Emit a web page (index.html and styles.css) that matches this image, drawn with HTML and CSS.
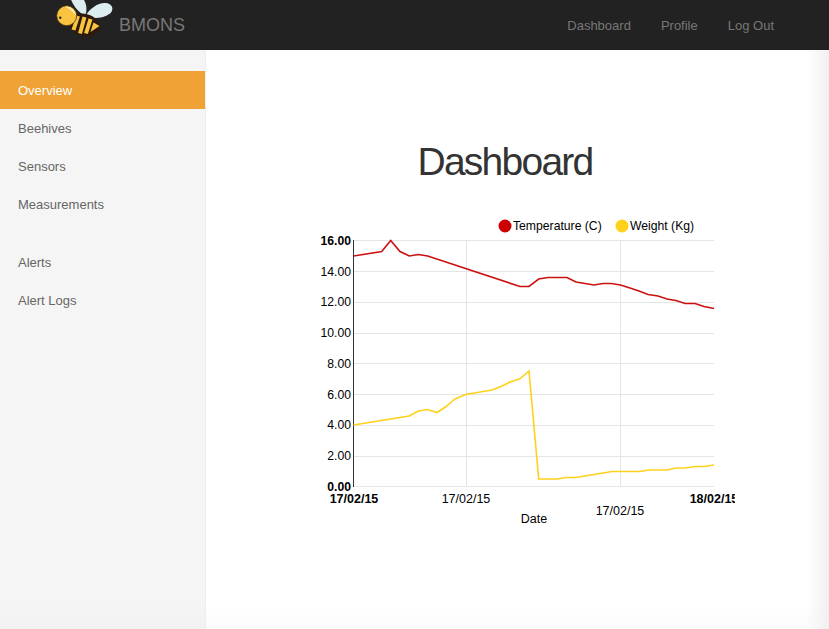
FILE: index.html
```html
<!DOCTYPE html>
<html lang="en">
<head>
    <meta charset="UTF-8">
    <meta name="viewport" content="width=device-width, initial-scale=1.0">
    <title>BMONS Dashboard</title>
    <link rel="stylesheet" href="styles.css">
</head>
<body>

<header class="navbar">
    <a class="brand" href="#">
        <svg class="logo" width="58" height="50" viewBox="0 0 58 50">
            <!-- wings -->
            <path d="M15 -3 C18 6 24 13 30 15.500 C33 9 31 2 27 -3 Z" fill="#dcedef"/>
            <path d="M31 15 C35 8 44 2 51 3 C58 4 59 10 55 13.500 C49 18 40 19 32 17 Z" fill="#dcedef"/>
            <!-- body -->
            <ellipse cx="29.500" cy="25" rx="15.500" ry="11" transform="rotate(15 29.500 25)" fill="#2e1a0c"/>
            <g class="stripes">
                <line x1="23" y1="16" x2="18.500" y2="30"/>
                <line x1="29.500" y1="17" x2="25" y2="33.500"/>
                <line x1="35.500" y1="19" x2="31" y2="33.500"/>
            </g>
            <path d="M38.500 22.500 L44.500 26 L35.500 32 Z" fill="#f9c440"/>
            <!-- head -->
            <circle cx="11.700" cy="15.700" r="10" fill="#f9c440" stroke="#4a3312" stroke-width="0.8"/>
            <path d="M10 6.500 C15 6 20.500 10 21 15.500 C18 11.500 14.500 8.500 10 6.500 Z" fill="#fdf0c4"/>
            <circle cx="5.200" cy="17.700" r="1.200" fill="#222"/>
        </svg>
        <span class="brand-name">BMONS</span>
    </a>
    <nav class="top-links">
        <a href="#">Dashboard</a>
        <a href="#">Profile</a>
        <a href="#">Log Out</a>
    </nav>
</header>

<div class="layout">
    <aside class="sidebar">
        <ul class="side-nav">
            <li class="active"><a href="#">Overview</a></li>
            <li><a href="#">Beehives</a></li>
            <li><a href="#">Sensors</a></li>
            <li><a href="#">Measurements</a></li>
        </ul>
        <ul class="side-nav">
            <li><a href="#">Alerts</a></li>
            <li><a href="#">Alert Logs</a></li>
        </ul>
    </aside>

    <main class="content">
        <h1 class="page-title">Dashboard</h1>
        <svg class="chart" width="415" height="320" viewBox="320 210 415 320">
            <g class="grid">
                <line x1="353" x2="714" y1="240.500" y2="240.500"/>
                <line x1="353" x2="714" y1="271.500" y2="271.500"/>
                <line x1="353" x2="714" y1="302.500" y2="302.500"/>
                <line x1="353" x2="714" y1="333.500" y2="333.500"/>
                <line x1="353" x2="714" y1="363.500" y2="363.500"/>
                <line x1="353" x2="714" y1="394.500" y2="394.500"/>
                <line x1="353" x2="714" y1="425.500" y2="425.500"/>
                <line x1="353" x2="714" y1="456.500" y2="456.500"/>
                <line x1="353" x2="714" y1="486.500" y2="486.500"/>
                <line x1="466.500" x2="466.500" y1="240" y2="487"/>
                <line x1="620.500" x2="620.500" y1="240" y2="487"/>
            </g>
            <line class="axis" x1="353.500" x2="353.500" y1="240" y2="487"/>

            <polyline class="series temp" points="353.500,256 381.700,251.500 390.700,240.500 400,251.500 409.300,256 418.300,254.500 427.700,256 520,286.500 529,286.500 538.700,279 548,277.500 567,277.500 576,282 585,283.500 594,285 603,283.500 611,283.500 620.500,285 630,288 639,291 648,294.500 658,296 667,299 676,300.500 685,303.500 695,303.500 704,306.500 714,308.500"/>
            <polyline class="series weight" points="353.500,425 409,416 418.500,411 427.700,409.500 437,412.500 446,406.500 455,399 465.500,394.500 492,390 501,386.500 510,382 519.500,379 529,371 538.700,479 557,479 566,477.500 576,477.500 585,476 594,474.500 603,473 612,471.500 640,471.500 649,470 667,470 676,468 685,468 695,466.500 704,466.500 714,465"/>

            <g class="y-labels">
                <text class="strong" x="351" y="245">16.00</text>
                <text x="351" y="276">14.00</text>
                <text x="351" y="306">12.00</text>
                <text x="351" y="337">10.00</text>
                <text x="351" y="368">8.00</text>
                <text x="351" y="399">6.00</text>
                <text x="351" y="429">4.00</text>
                <text x="351" y="460">2.00</text>
                <text class="strong" x="351" y="491">0.00</text>
            </g>
            <g class="x-labels">
                <text class="strong" x="354" y="503">17/02/15</text>
                <text x="466" y="503">17/02/15</text>
                <text x="620" y="515">17/02/15</text>
                <text class="strong" x="714" y="503">18/02/15</text>
                <text x="534" y="523">Date</text>
            </g>

            <circle cx="505" cy="226" r="6.500" fill="#cc0000"/>
            <text class="legend" x="513" y="230">Temperature (C)</text>
            <circle cx="622" cy="226" r="6.500" fill="#ffd11a"/>
            <text class="legend" x="630" y="230">Weight (Kg)</text>
        </svg>
    </main>
</div>

</body>
</html>
```
FILE: styles.css
```css
html, body {
    height: 100%;
}

body {
    font-family: "Liberation Sans", Arial, sans-serif;
    font-size: 13px;
    margin: 0;
    padding: 0;
    color: #333;
    background-color: #fff;
    overflow: hidden;
}

a {
    text-decoration: none;
}

.navbar {
    display: flex;
    justify-content: space-between;
    align-items: center;
    height: 50px;
    padding: 0 55px;
    background-color: #222;
}

.brand {
    display: flex;
    align-items: center;
    color: #777;
}

.logo {
    display: block;
}

.stripes line {
    stroke: #f9c440;
    stroke-width: 4;
}

.brand-name {
    margin-left: 6px;
    font-size: 18px;
}

.top-links {
    display: flex;
    gap: 30px;
    padding-top: 1px;
}

.top-links a {
    color: #777;
}

.layout {
    display: flex;
    height: calc(100% - 50px);
}

.sidebar {
    width: 205px;
    flex: none;
    padding-top: 21px;
    background: linear-gradient(to top, #f2f2f2, #f5f5f5 30px);
    border-right: 1px solid #eee;
}

.side-nav {
    list-style: none;
    margin: 0 0 20px;
    padding: 0;
}

.side-nav a {
    display: block;
    height: 38px;
    box-sizing: border-box;
    padding: 1px 0 0 18px;
    line-height: 37px;
    color: #666;
}

.side-nav .active a {
    background-color: #efa236;
    color: #fff;
}

.content {
    flex: 1;
    padding-right: 25px;
    background:
        linear-gradient(to right, rgba(240, 240, 240, 0) calc(100% - 22px), #f0f0f0),
        linear-gradient(to top, #fbfbfb, rgba(251, 251, 251, 0) 25px);
}

.page-title {
    margin: 89px 0 0;
    height: 71px;
    line-height: 46px;
    font-size: 39px;
    font-weight: 400;
    letter-spacing: -1.75px;
    text-align: center;
}

.chart {
    display: block;
    margin-left: 114px;
}

.grid line {
    stroke: #e5e5e5;
    stroke-width: 1;
}

.axis {
    stroke: #333;
    stroke-width: 1;
}

.series {
    fill: none;
    stroke-width: 1.6;
}

.temp {
    stroke: #cc1111;
}

.weight {
    stroke: #ffd11a;
}

.chart text {
    font-family: "Liberation Sans", Arial, sans-serif;
    font-size: 12.2px;
    fill: #000;
}

.y-labels text {
    text-anchor: end;
}

.chart .x-labels text {
    font-size: 12.5px;
    text-anchor: middle;
}

.chart .strong {
    font-weight: 700;
}
```
